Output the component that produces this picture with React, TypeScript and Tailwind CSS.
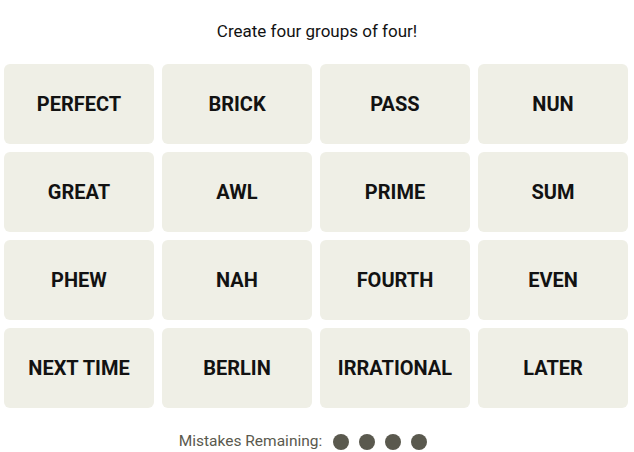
const words = [
  "PERFECT", "BRICK", "PASS", "NUN",
  "GREAT", "AWL", "PRIME", "SUM",
  "PHEW", "NAH", "FOURTH", "EVEN",
  "NEXT TIME", "BERLIN", "IRRATIONAL", "LATER",
]

export default function App() {
  return (
    <div className="w-[634px] h-[452px] bg-white font-['Roboto',sans-serif] text-black">
      <p className="pt-[20px] h-[64px] text-center text-[17px] leading-[22px] text-[#121212]">
        Create four groups of four!
      </p>
      <div className="grid grid-cols-4 gap-2 pl-[4px] pr-[6px]">
        {words.map((w) => (
          <button
            key={w}
            className="h-[80px] rounded-md bg-[#efefe6] flex items-center justify-center text-[20px] font-bold text-[#121212]"
          >
            {w}
          </button>
        ))}
      </div>
      <div className="mt-[22px] pr-[28px] flex items-center justify-center gap-[11px] text-[15.5px] text-[#5a594e]">
        <span>Mistakes Remaining:</span>
        <div className="flex gap-[10px]">
          {[0, 1, 2, 3].map((i) => (
            <span key={i} className="w-4 h-4 rounded-full bg-[#5a594e]" />
          ))}
        </div>
      </div>
    </div>
  )
}
